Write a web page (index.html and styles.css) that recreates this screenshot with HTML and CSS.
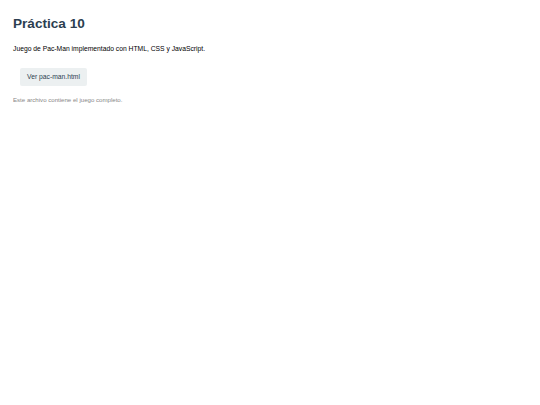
FILE: index.html
```html
<!DOCTYPE html>
<html lang="es">
<head>
<meta charset="utf-8">
<title>Práctica 10</title>
<link rel="stylesheet" href="styles.css">
</head>
<body>
<main class="page">
  <h1 class="title">Práctica 10</h1>
  <p class="desc">Juego de Pac-Man implementado con HTML, CSS y JavaScript.</p>
  <a class="btn" href="#">Ver pac-man.html</a>
  <p class="note">Este archivo contiene el juego completo.</p>
</main>
</body>
</html>
```
FILE: styles.css
```css
html, body {
  margin: 0;
  padding: 0;
  background: #ffffff;
}
.page {
  padding: 16px 13px;
  font-family: "Liberation Sans", Arial, sans-serif;
  display: flex;
  flex-direction: column;
  align-items: flex-start;
}
.title {
  margin: 0;
  font-size: 13.6px;
  font-weight: bold;
  color: #2c3e50;
  line-height: 16px;
}
.desc {
  margin: 13px 0 0;
  font-size: 6.75px;
  line-height: 8px;
  color: #000;
}
.btn {
  margin: 15px 0 0 7px;
  display: inline-block;
  background: #ecf0f1;
  color: #2c3e50;
  text-decoration: none;
  font-size: 6.75px;
  line-height: 8px;
  padding: 5px 7px;
  border-radius: 2px;
}
.note {
  margin: 10px 0 0;
  font-size: 6.1px;
  line-height: 7px;
  color: #888888;
}
```
